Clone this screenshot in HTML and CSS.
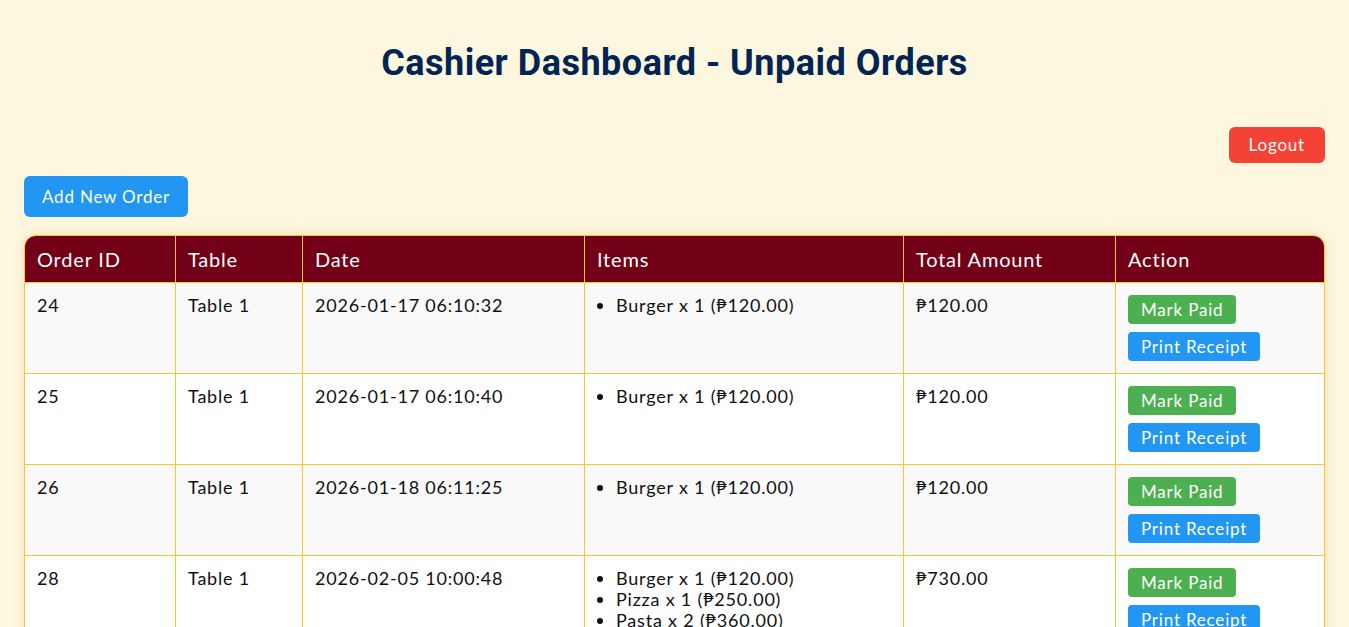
FILE: index.html
```html
<!DOCTYPE html>
<html lang="en">
<head>
    <meta charset="UTF-8">
    <meta name="viewport" content="width=device-width, initial-scale=1.0">
    <title>Cashier Dashboard</title>
    <link rel="stylesheet" href="styles.css">
</head>
<body>
    <h1>Cashier Dashboard - Unpaid Orders</h1>

    <div class="top-bar">
        <a href="#" class="btn btn-logout">Logout</a>
    </div>

    <a href="#" class="btn btn-add">Add New Order</a>

    <div class="table-wrap">
        <table class="orders">
            <thead>
                <tr>
                    <th class="col-id">Order ID</th>
                    <th class="col-table">Table</th>
                    <th class="col-date">Date</th>
                    <th class="col-items">Items</th>
                    <th class="col-total">Total Amount</th>
                    <th>Action</th>
                </tr>
            </thead>
            <tbody>
                <tr>
                    <td>24</td>
                    <td>Table 1</td>
                    <td>2026-01-17 06:10:32</td>
                    <td>
                        <ul>
                            <li>Burger x 1 (₱120.00)</li>
                        </ul>
                    </td>
                    <td>₱120.00</td>
                    <td>
                        <button class="btn-sm btn-paid">Mark Paid</button>
                        <button class="btn-sm btn-print">Print Receipt</button>
                    </td>
                </tr>
                <tr>
                    <td>25</td>
                    <td>Table 1</td>
                    <td>2026-01-17 06:10:40</td>
                    <td>
                        <ul>
                            <li>Burger x 1 (₱120.00)</li>
                        </ul>
                    </td>
                    <td>₱120.00</td>
                    <td>
                        <button class="btn-sm btn-paid">Mark Paid</button>
                        <button class="btn-sm btn-print">Print Receipt</button>
                    </td>
                </tr>
                <tr>
                    <td>26</td>
                    <td>Table 1</td>
                    <td>2026-01-18 06:11:25</td>
                    <td>
                        <ul>
                            <li>Burger x 1 (₱120.00)</li>
                        </ul>
                    </td>
                    <td>₱120.00</td>
                    <td>
                        <button class="btn-sm btn-paid">Mark Paid</button>
                        <button class="btn-sm btn-print">Print Receipt</button>
                    </td>
                </tr>
                <tr>
                    <td>28</td>
                    <td>Table 1</td>
                    <td>2026-02-05 10:00:48</td>
                    <td>
                        <ul>
                            <li>Burger x 1 (₱120.00)</li>
                            <li>Pizza x 1 (₱250.00)</li>
                            <li>Pasta x 2 (₱360.00)</li>
                        </ul>
                    </td>
                    <td>₱730.00</td>
                    <td>
                        <button class="btn-sm btn-paid">Mark Paid</button>
                        <button class="btn-sm btn-print">Print Receipt</button>
                    </td>
                </tr>
            </tbody>
        </table>
    </div>
</body>
</html>
```

FILE: styles.css
```css
body {
    margin: 0;
    padding: 0 24px 24px;
    background: #fef7df;
    font-family: Lato, "DejaVu Sans", sans-serif;
    letter-spacing: 0.8px;
    color: #111;
}

h1 {
    margin: 0;
    padding: 42px 0 0;
    text-align: center;
    font-family: Roboto, "Noto Sans", sans-serif;
    font-size: 36px;
    font-weight: 700;
    color: #002454;
    letter-spacing: 0.5px;
}

.top-bar {
    display: flex;
    justify-content: flex-end;
    margin-top: 43px;
}

.btn {
    display: inline-block;
    color: white;
    text-decoration: none;
    border-radius: 6px;
}

.btn-logout {
    background: #f44336;
    padding: 8px 20px;
    font-size: 17px;
    line-height: 20px;
}

.btn-add {
    margin-top: 13px;
    background: #2196f3;
    padding: 10px 18px;
    font-size: 17px;
    line-height: 21px;
}

.table-wrap {
    margin-top: 18px;
    border: 1px solid #f7c82b;
    border-radius: 12px 12px 0 0;
    overflow: hidden;
    box-shadow: 0 0 12px rgba(160, 120, 40, 0.2);
}

.orders {
    width: 100%;
    border-collapse: collapse;
    font-size: 18px;
}

.orders th,
.orders td {
    border: 1px solid #f7c82b;
    padding: 12px;
    text-align: left;
    vertical-align: top;
}

.orders tr > :first-child { border-left: none; }
.orders tr > :last-child { border-right: none; }
.orders thead th { border-top: none; }

.orders th {
    background: #720017;
    color: white;
    font-weight: 400;
    font-size: 20px;
    line-height: 22px;
}

.orders td {
    line-height: 21px;
}

.orders tbody tr:nth-child(odd) {
    background: #f9f9f9;
}

.orders tbody tr:nth-child(even) {
    background: white;
}

.col-id { width: 126px; }
.col-table { width: 102px; }
.col-date { width: 257px; }
.col-items { width: 294px; }
.col-total { width: 187px; }

.orders ul {
    margin: 0;
    padding-left: 19px;
}

.btn-sm {
    display: block;
    border: none;
    border-radius: 4px;
    color: white;
    font-family: inherit;
    letter-spacing: inherit;
    font-size: 17px;
    line-height: 19px;
    padding: 5px 13px;
    cursor: pointer;
}

.btn-sm + .btn-sm {
    margin-top: 8px;
}

.btn-paid {
    background: #4caf50;
}

.btn-print {
    background: #2196f3;
}
```
